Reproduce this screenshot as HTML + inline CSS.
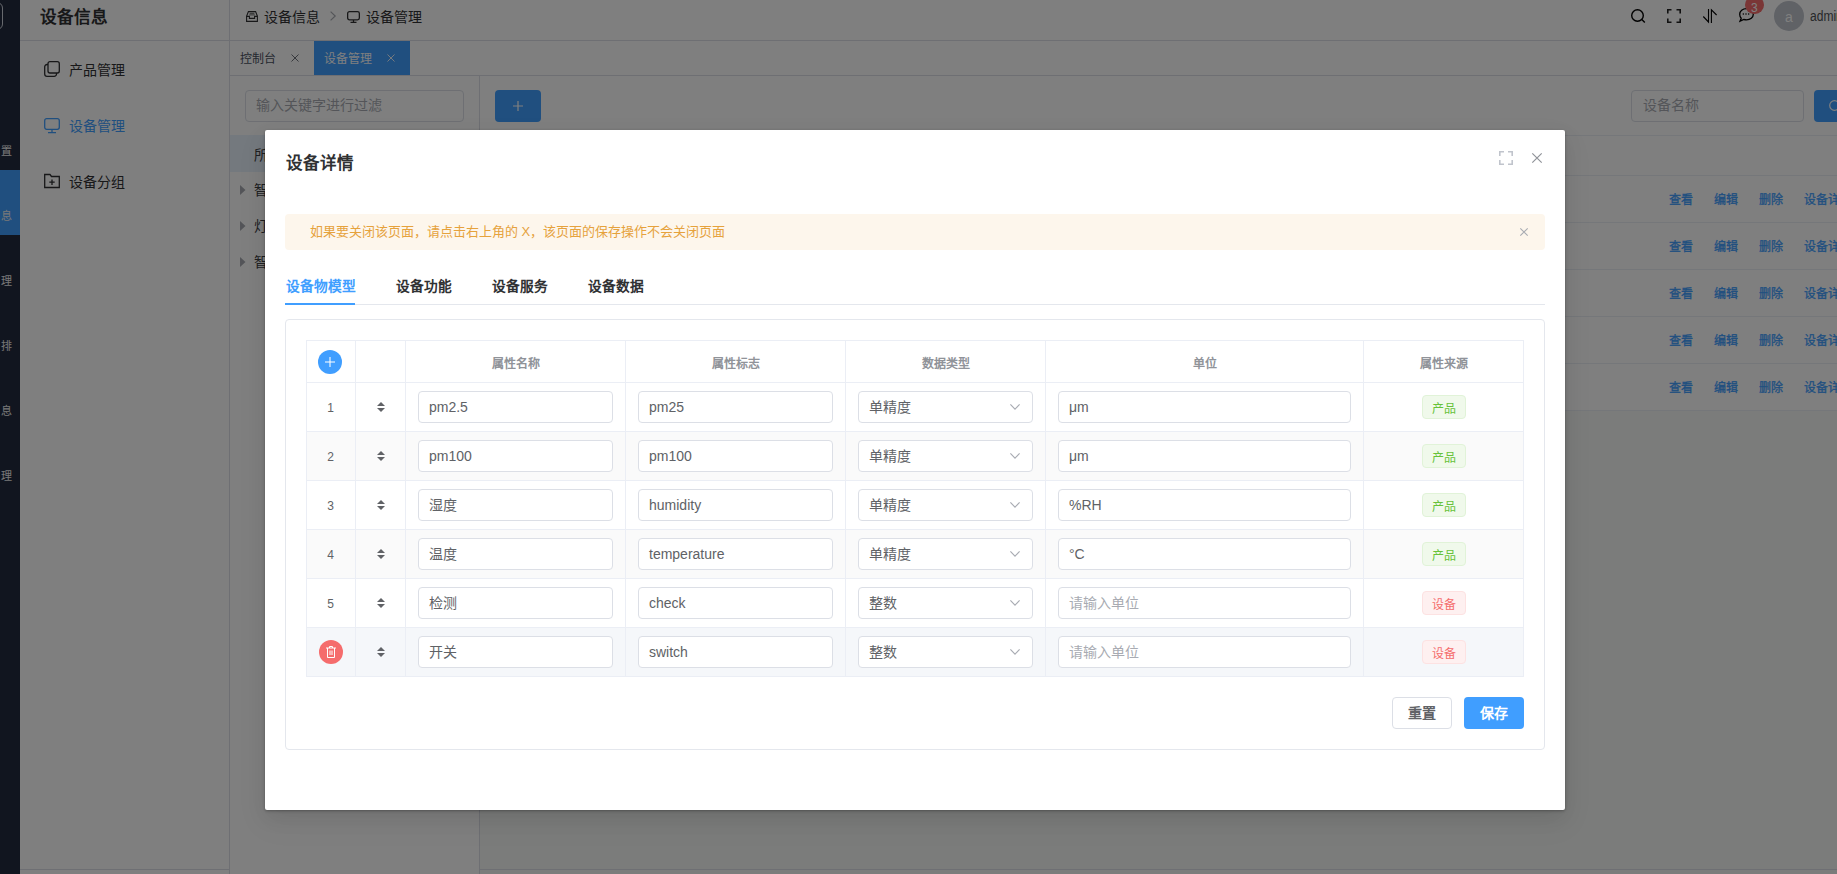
<!DOCTYPE html>
<html lang="zh-CN"><head><meta charset="utf-8"><title>设备详情</title>
<style>
*{box-sizing:border-box;margin:0;padding:0}
html,body{width:1837px;height:874px;overflow:hidden;background:#fff;font-family:"Liberation Sans", sans-serif;}
.abs{position:absolute}
.t{position:absolute;white-space:nowrap;line-height:1}
svg{position:absolute;overflow:visible}
</style></head><body>

<div id="bg" class="abs" style="left:0;top:0;width:1837px;height:874px;background:#fff">
<div class="abs" style="left:0;top:0;width:20px;height:874px;background:#222a3e;overflow:hidden">
<div class="abs" style="left:-26px;top:2px;width:29px;height:28px;border:1px solid #cfd3dc;border-radius:6px"></div>
<div class="abs" style="left:0;top:170px;width:20px;height:65px;background:#409eff"></div>
<div class="t" style="left:0.5px;top:145.5px;font-size:11px;color:#f0f0f0">置</div>
<div class="t" style="left:0.5px;top:210.5px;font-size:11px;color:#f0f0f0">息</div>
<div class="t" style="left:0.5px;top:275.5px;font-size:11px;color:#f0f0f0">理</div>
<div class="t" style="left:0.5px;top:340.5px;font-size:11px;color:#f0f0f0">排</div>
<div class="t" style="left:0.5px;top:405.5px;font-size:11px;color:#f0f0f0">息</div>
<div class="t" style="left:0.5px;top:470.5px;font-size:11px;color:#f0f0f0">理</div>
</div>
<div class="abs" style="left:229px;top:0;width:1px;height:874px;background:#dcdfe6"></div>
<div class="abs" style="left:20px;top:40px;width:1817px;height:1px;background:#dcdfe6"></div>
<div class="t" style="left:40px;top:10px;font-size:16.6px;font-weight:bold;color:#303133">设备信息</div>
<div class="t" style="left:69px;top:63px;font-size:14px;color:#303133">产品管理</div>
<div class="t" style="left:69px;top:119px;font-size:14px;color:#409eff">设备管理</div>
<div class="t" style="left:69px;top:175px;font-size:14px;color:#303133">设备分组</div>
<svg style="left:44px;top:61px" width="16" height="16" viewBox="0 0 16 16" fill="none" stroke="#303133" stroke-width="1.3"><rect x="4" y="0.7" width="11.3" height="11.3" rx="2"/><path d="M4 3.5H3A2.3 2.3 0 0 0 0.7 5.8V13A2.3 2.3 0 0 0 3 15.3H10.2A2.3 2.3 0 0 0 12.5 13V12"/></svg>
<svg style="left:44px;top:118px" width="16" height="16" viewBox="0 0 16 16" fill="none" stroke="#409eff" stroke-width="1.3"><rect x="0.7" y="0.7" width="14.6" height="10.6" rx="2"/><path d="M8 11.3V14.5M4 14.6H12"/></svg>
<svg style="left:44px;top:173px" width="16" height="16" viewBox="0 0 16 16" fill="none" stroke="#303133" stroke-width="1.3"><path d="M0.7 1.5H6L7.5 3.5H15.3V14.5H0.7Z"/><path d="M8 6.5V12M5.3 9.2H10.7"/></svg>
<svg style="left:246px;top:10.5px" width="12" height="11" viewBox="0 0 12 11" fill="none" stroke="#303133" stroke-width="1.1"><path d="M0.6 5.2L2.4 0.6H9.6L11.4 5.2V10.4H0.6Z"/><path d="M0.6 5.4H3.4V7.4H8.6V5.4H11.4"/><path d="M3.6 2.3H8.4M3.2 3.9H8.8" stroke-width="0.8"/></svg>
<div class="t" style="left:264px;top:9.5px;font-size:14px;color:#303133">设备信息</div>
<svg style="left:330px;top:11px" width="6" height="10" viewBox="0 0 6 10" fill="none" stroke="#a8abb2" stroke-width="1.2"><path d="M0.6 0.6L5.2 5L0.6 9.4"/></svg>
<svg style="left:347px;top:10.5px" width="13" height="12" viewBox="0 0 13 12" fill="none" stroke="#303133" stroke-width="1.3"><rect x="0.65" y="0.65" width="11.7" height="8.2" rx="1.8"/><path d="M6.5 8.9V11.2M3.5 11.3H9.5"/></svg>
<div class="t" style="left:366px;top:9.5px;font-size:14px;color:#303133">设备管理</div>
<svg style="left:1631px;top:9px" width="15" height="14" viewBox="0 0 15 14" fill="none" stroke="#000" stroke-width="1.4"><circle cx="6.5" cy="6.5" r="5.8"/><path d="M10.8 10.6L13.8 13.5"/></svg>
<svg style="left:1667px;top:9px" width="14" height="14" viewBox="0 0 14 14" fill="none" stroke="#222" stroke-width="1.6"><path d="M0.8 4.5V0.8H4.5M9.5 0.8H13.2V4.5M13.2 9.5V13.2H9.5M4.5 13.2H0.8V9.5"/></svg>
<svg style="left:1703px;top:9px" width="14" height="14" viewBox="0 0 14 14" fill="none" stroke="#000" stroke-width="1.1"><path d="M0.3 7.5L5.5 13V0M8.4 13.9V0.8L13.6 6"/></svg>
<svg style="left:1739px;top:8px" width="15" height="14" viewBox="0 0 15 14" fill="none" stroke="#000" stroke-width="1.3"><path d="M7.5 0.7C11.3 0.7 14.3 3.2 14.3 6.3C14.3 9.4 11.3 11.9 7.5 11.9C6.5 11.9 5.6 11.7 4.8 11.5L1 13.2L2.2 10.2C1.2 9.2 0.7 7.9 0.7 6.3C0.7 3.2 3.7 0.7 7.5 0.7Z"/><g stroke="none" fill="#000"><circle cx="4.3" cy="6.0" r="0.75"/><circle cx="7" cy="6.0" r="0.75"/><circle cx="9.7" cy="6.0" r="0.75"/></g></svg>
<div class="abs" style="left:1745px;top:-4px;width:19px;height:18px;border-radius:9px;background:#f56c6c"></div>
<div class="t" style="left:1751px;top:2px;font-size:12px;color:#fff">3</div>
<div class="abs" style="left:1774px;top:1px;width:30px;height:30px;border-radius:50%;background:#c0c4cc"></div>
<div class="t" style="left:1785px;top:10px;font-size:14px;color:#fff">a</div>
<div class="t" style="left:1810px;top:9px;font-size:14px;color:#505256;transform:scaleX(0.86);transform-origin:0 0">admin</div>
<div class="abs" style="left:229px;top:75px;width:1608px;height:1px;background:#dcdfe6"></div>
<div class="t" style="left:240px;top:53px;font-size:12px;color:#495060">控制台</div>
<svg style="left:291px;top:54px" width="8" height="8" viewBox="0 0 8 8" stroke="#5f636b" stroke-width="0.9"><path d="M0.5 0.5L7.5 7.5M7.5 0.5L0.5 7.5"/></svg>
<div class="abs" style="left:314px;top:41px;width:96px;height:34px;background:#409eff"></div>
<div class="t" style="left:324px;top:53px;font-size:12px;color:#fff">设备管理</div>
<svg style="left:387px;top:54px" width="8" height="8" viewBox="0 0 8 8" stroke="#fff" stroke-width="0.9"><path d="M0.5 0.5L7.5 7.5M7.5 0.5L0.5 7.5"/></svg>
<div class="abs" style="left:479px;top:76px;width:1px;height:798px;background:#dcdfe6"></div>
<div class="abs" style="left:245px;top:90px;width:219px;height:32px;border:1px solid #dcdfe6;border-radius:4px"></div>
<div class="t" style="left:256px;top:98px;font-size:14px;color:#a8abb2">输入关键字进行过滤</div>
<div class="abs" style="left:230px;top:135px;width:249px;height:37px;background:#e9f2fc"></div>
<div class="t" style="left:254px;top:148px;font-size:14px;color:#404246">所有</div>
<svg style="left:240px;top:185px" width="6" height="10" viewBox="0 0 6 10"><path d="M0 0L5.5 5L0 10Z" fill="#a8abb2"/></svg>
<div class="t" style="left:254px;top:183px;font-size:14px;color:#404246">智能设备</div>
<svg style="left:240px;top:221px" width="6" height="10" viewBox="0 0 6 10"><path d="M0 0L5.5 5L0 10Z" fill="#a8abb2"/></svg>
<div class="t" style="left:254px;top:219px;font-size:14px;color:#404246">灯光设备</div>
<svg style="left:240px;top:257px" width="6" height="10" viewBox="0 0 6 10"><path d="M0 0L5.5 5L0 10Z" fill="#a8abb2"/></svg>
<div class="t" style="left:254px;top:255px;font-size:14px;color:#404246">智能开关</div>
<div class="abs" style="left:20px;top:869px;width:209px;height:1px;background:#dcdfe6"></div>
<div class="abs" style="left:480px;top:410px;width:1357px;height:464px;background:#f6f8f6"></div>
<div class="abs" style="left:480px;top:869px;width:1357px;height:1px;background:#dcdfe6"></div>
<div class="abs" style="left:495px;top:90px;width:46px;height:32px;border-radius:4px;background:#409eff"></div>
<svg style="left:513px;top:101px" width="10" height="10" viewBox="0 0 10 10" stroke="#fff" stroke-width="1.2"><path d="M5 0V10M0 5H10"/></svg>
<div class="abs" style="left:1631px;top:90px;width:173px;height:32px;border:1px solid #dcdfe6;border-radius:4px"></div>
<div class="t" style="left:1643px;top:98px;font-size:14px;color:#a8abb2">设备名称</div>
<div class="abs" style="left:1814px;top:90px;width:60px;height:32px;border-radius:4px;background:#409eff"></div>
<svg style="left:1829px;top:100px" width="12" height="12" viewBox="0 0 12 12" fill="none" stroke="#fff" stroke-width="1.2"><circle cx="5.5" cy="5.5" r="4.8"/></svg>
<div class="abs" style="left:480px;top:135px;width:1357px;height:1px;background:#ebeef5"></div>
<div class="abs" style="left:480px;top:175px;width:1357px;height:1px;background:#ebeef5"></div>
<div class="abs" style="left:480px;top:222px;width:1357px;height:1px;background:#ebeef5"></div>
<div class="abs" style="left:480px;top:269px;width:1357px;height:1px;background:#ebeef5"></div>
<div class="abs" style="left:480px;top:316px;width:1357px;height:1px;background:#ebeef5"></div>
<div class="abs" style="left:480px;top:363px;width:1357px;height:1px;background:#ebeef5"></div>
<div class="abs" style="left:480px;top:410px;width:1357px;height:1px;background:#ebeef5"></div>
<div class="t" style="left:1669px;top:194px;font-size:12px;color:#409eff;-webkit-text-stroke:0.3px #409eff">查看</div>
<div class="t" style="left:1714px;top:194px;font-size:12px;color:#409eff;-webkit-text-stroke:0.3px #409eff">编辑</div>
<div class="t" style="left:1759px;top:194px;font-size:12px;color:#409eff;-webkit-text-stroke:0.3px #409eff">删除</div>
<div class="t" style="left:1804px;top:194px;font-size:12px;color:#409eff;-webkit-text-stroke:0.3px #409eff">设备详情</div>
<div class="t" style="left:1669px;top:241px;font-size:12px;color:#409eff;-webkit-text-stroke:0.3px #409eff">查看</div>
<div class="t" style="left:1714px;top:241px;font-size:12px;color:#409eff;-webkit-text-stroke:0.3px #409eff">编辑</div>
<div class="t" style="left:1759px;top:241px;font-size:12px;color:#409eff;-webkit-text-stroke:0.3px #409eff">删除</div>
<div class="t" style="left:1804px;top:241px;font-size:12px;color:#409eff;-webkit-text-stroke:0.3px #409eff">设备详情</div>
<div class="t" style="left:1669px;top:288px;font-size:12px;color:#409eff;-webkit-text-stroke:0.3px #409eff">查看</div>
<div class="t" style="left:1714px;top:288px;font-size:12px;color:#409eff;-webkit-text-stroke:0.3px #409eff">编辑</div>
<div class="t" style="left:1759px;top:288px;font-size:12px;color:#409eff;-webkit-text-stroke:0.3px #409eff">删除</div>
<div class="t" style="left:1804px;top:288px;font-size:12px;color:#409eff;-webkit-text-stroke:0.3px #409eff">设备详情</div>
<div class="t" style="left:1669px;top:335px;font-size:12px;color:#409eff;-webkit-text-stroke:0.3px #409eff">查看</div>
<div class="t" style="left:1714px;top:335px;font-size:12px;color:#409eff;-webkit-text-stroke:0.3px #409eff">编辑</div>
<div class="t" style="left:1759px;top:335px;font-size:12px;color:#409eff;-webkit-text-stroke:0.3px #409eff">删除</div>
<div class="t" style="left:1804px;top:335px;font-size:12px;color:#409eff;-webkit-text-stroke:0.3px #409eff">设备详情</div>
<div class="t" style="left:1669px;top:382px;font-size:12px;color:#409eff;-webkit-text-stroke:0.3px #409eff">查看</div>
<div class="t" style="left:1714px;top:382px;font-size:12px;color:#409eff;-webkit-text-stroke:0.3px #409eff">编辑</div>
<div class="t" style="left:1759px;top:382px;font-size:12px;color:#409eff;-webkit-text-stroke:0.3px #409eff">删除</div>
<div class="t" style="left:1804px;top:382px;font-size:12px;color:#409eff;-webkit-text-stroke:0.3px #409eff">设备详情</div>
</div>
<div class="abs" style="left:0;top:0;width:1837px;height:874px;background:rgba(0,0,0,.5)"></div>
<div id="dlg" class="abs" style="left:265px;top:130px;width:1300px;height:680px;background:#fff;border-radius:2px;box-shadow:0 1px 3px rgba(0,0,0,.3),0 12px 32px 4px rgba(0,0,0,.04),0 8px 20px rgba(0,0,0,.08)">
</div>
<div class="t" style="left:286px;top:155px;font-size:16.5px;font-weight:bold;color:#303133">设备详情</div>
<svg style="left:1499px;top:151px" width="14" height="14" viewBox="0 0 14 14" fill="none" stroke="#c0c4cc" stroke-width="1.6"><path d="M0.8 5V0.8H5M9 0.8H13.2V5M13.2 9V13.2H9M5 13.2H0.8V9"/></svg>
<svg style="left:1532px;top:153px" width="10" height="10" viewBox="0 0 10 10" stroke="#909399" stroke-width="1.2"><path d="M0.3 0.3L9.7 9.7M9.7 0.3L0.3 9.7"/></svg>
<div class="abs" style="left:285px;top:214px;width:1260px;height:36px;background:#fdf6ec;border-radius:4px"></div>
<div class="t" style="left:310px;top:225px;font-size:13px;color:#e6a23c">如果要关闭该页面，请点击右上角的 X，该页面的保存操作不会关闭页面</div>
<svg style="left:1520px;top:228px" width="8" height="8" viewBox="0 0 8 8" stroke="#a8abb2" stroke-width="1.1"><path d="M0.3 0.3L7.7 7.7M7.7 0.3L0.3 7.7"/></svg>
<div class="t" style="left:285.5px;top:280px;font-size:13.7px;font-weight:bold;color:#409eff">设备物模型</div>
<div class="t" style="left:395.5px;top:280px;font-size:13.7px;font-weight:bold;color:#303133">设备功能</div>
<div class="t" style="left:491.5px;top:280px;font-size:13.7px;font-weight:bold;color:#303133">设备服务</div>
<div class="t" style="left:587.5px;top:280px;font-size:13.7px;font-weight:bold;color:#303133">设备数据</div>
<div class="abs" style="left:285px;top:304px;width:1260px;height:1px;background:#e4e7ed"></div>
<div class="abs" style="left:285px;top:303px;width:70px;height:2px;background:#409eff"></div>
<div class="abs" style="left:285px;top:319px;width:1260px;height:431px;border:1px solid #e4e7ed;border-radius:4px"></div>
<div class="abs" style="left:306px;top:382px;width:1217px;height:49px;background:#fff"></div>
<div class="abs" style="left:306px;top:431px;width:1217px;height:49px;background:#fafafa"></div>
<div class="abs" style="left:306px;top:480px;width:1217px;height:49px;background:#fff"></div>
<div class="abs" style="left:306px;top:529px;width:1217px;height:49px;background:#fafafa"></div>
<div class="abs" style="left:306px;top:578px;width:1217px;height:49px;background:#fff"></div>
<div class="abs" style="left:306px;top:627px;width:1217px;height:49px;background:#f5f7fa"></div>
<div class="abs" style="left:306px;top:340px;width:1218px;height:1px;background:#ebeef5"></div>
<div class="abs" style="left:306px;top:382px;width:1218px;height:1px;background:#ebeef5"></div>
<div class="abs" style="left:306px;top:431px;width:1218px;height:1px;background:#ebeef5"></div>
<div class="abs" style="left:306px;top:480px;width:1218px;height:1px;background:#ebeef5"></div>
<div class="abs" style="left:306px;top:529px;width:1218px;height:1px;background:#ebeef5"></div>
<div class="abs" style="left:306px;top:578px;width:1218px;height:1px;background:#ebeef5"></div>
<div class="abs" style="left:306px;top:627px;width:1218px;height:1px;background:#ebeef5"></div>
<div class="abs" style="left:306px;top:676px;width:1218px;height:1px;background:#ebeef5"></div>
<div class="abs" style="left:306px;top:340px;width:1px;height:337px;background:#ebeef5"></div>
<div class="abs" style="left:355px;top:340px;width:1px;height:337px;background:#ebeef5"></div>
<div class="abs" style="left:405px;top:340px;width:1px;height:337px;background:#ebeef5"></div>
<div class="abs" style="left:625px;top:340px;width:1px;height:337px;background:#ebeef5"></div>
<div class="abs" style="left:845px;top:340px;width:1px;height:337px;background:#ebeef5"></div>
<div class="abs" style="left:1045px;top:340px;width:1px;height:337px;background:#ebeef5"></div>
<div class="abs" style="left:1363px;top:340px;width:1px;height:337px;background:#ebeef5"></div>
<div class="abs" style="left:1523px;top:340px;width:1px;height:337px;background:#ebeef5"></div>
<div class="abs" style="left:318px;top:350px;width:24px;height:24px;border-radius:50%;background:#409eff"></div>
<svg style="left:325px;top:357px" width="10" height="10" viewBox="0 0 10 10" stroke="#fff" stroke-width="1.05"><path d="M5 0V10M0 5H10"/></svg>
<div class="t" style="left:406px;width:220px;text-align:center;top:357.5px;font-size:12px;font-weight:bold;color:#909399">属性名称</div>
<div class="t" style="left:626px;width:220px;text-align:center;top:357.5px;font-size:12px;font-weight:bold;color:#909399">属性标志</div>
<div class="t" style="left:846px;width:200px;text-align:center;top:357.5px;font-size:12px;font-weight:bold;color:#909399">数据类型</div>
<div class="t" style="left:1046px;width:318px;text-align:center;top:357.5px;font-size:12px;font-weight:bold;color:#909399">单位</div>
<div class="t" style="left:1364px;width:160px;text-align:center;top:357.5px;font-size:12px;font-weight:bold;color:#909399">属性来源</div>
<div class="t" style="left:306px;width:49px;text-align:center;top:402px;font-size:12px;color:#606266">1</div>
<svg style="left:376px;top:402px" width="10" height="10" viewBox="0 0 10 10" fill="#606266"><path d="M5 0L9 4H1Z M1 6H9L5 10Z"/></svg>
<div class="abs" style="left:418px;top:391px;width:195px;height:32px;border:1px solid #dcdfe6;border-radius:4px;background:#fff"></div>
<div class="t" style="left:429px;top:400px;font-size:14px;color:#606266">pm2.5</div>
<div class="abs" style="left:638px;top:391px;width:195px;height:32px;border:1px solid #dcdfe6;border-radius:4px;background:#fff"></div>
<div class="t" style="left:649px;top:400px;font-size:14px;color:#606266">pm25</div>
<div class="abs" style="left:858px;top:391px;width:175px;height:32px;border:1px solid #dcdfe6;border-radius:4px;background:#fff"></div>
<div class="t" style="left:869px;top:400px;font-size:14px;color:#606266">单精度</div>
<div class="abs" style="left:1058px;top:391px;width:293px;height:32px;border:1px solid #dcdfe6;border-radius:4px;background:#fff"></div>
<div class="t" style="left:1069px;top:400px;font-size:14px;color:#606266">μm</div>
<svg style="left:1010px;top:404px" width="10" height="6" viewBox="0 0 10 6" fill="none" stroke="#a8abb2" stroke-width="1.1"><path d="M0.4 0.4L5 5.2L9.6 0.4"/></svg>
<div class="abs" style="left:1422px;top:395px;width:44px;height:24px;border:1px solid #e1f3d8;border-radius:4px;background:#f0f9eb"></div>
<div class="t" style="left:1432px;top:402.5px;font-size:12px;color:#67c23a">产品</div>
<div class="t" style="left:306px;width:49px;text-align:center;top:451px;font-size:12px;color:#606266">2</div>
<svg style="left:376px;top:451px" width="10" height="10" viewBox="0 0 10 10" fill="#606266"><path d="M5 0L9 4H1Z M1 6H9L5 10Z"/></svg>
<div class="abs" style="left:418px;top:440px;width:195px;height:32px;border:1px solid #dcdfe6;border-radius:4px;background:#fff"></div>
<div class="t" style="left:429px;top:449px;font-size:14px;color:#606266">pm100</div>
<div class="abs" style="left:638px;top:440px;width:195px;height:32px;border:1px solid #dcdfe6;border-radius:4px;background:#fff"></div>
<div class="t" style="left:649px;top:449px;font-size:14px;color:#606266">pm100</div>
<div class="abs" style="left:858px;top:440px;width:175px;height:32px;border:1px solid #dcdfe6;border-radius:4px;background:#fff"></div>
<div class="t" style="left:869px;top:449px;font-size:14px;color:#606266">单精度</div>
<div class="abs" style="left:1058px;top:440px;width:293px;height:32px;border:1px solid #dcdfe6;border-radius:4px;background:#fff"></div>
<div class="t" style="left:1069px;top:449px;font-size:14px;color:#606266">μm</div>
<svg style="left:1010px;top:453px" width="10" height="6" viewBox="0 0 10 6" fill="none" stroke="#a8abb2" stroke-width="1.1"><path d="M0.4 0.4L5 5.2L9.6 0.4"/></svg>
<div class="abs" style="left:1422px;top:444px;width:44px;height:24px;border:1px solid #e1f3d8;border-radius:4px;background:#f0f9eb"></div>
<div class="t" style="left:1432px;top:451.5px;font-size:12px;color:#67c23a">产品</div>
<div class="t" style="left:306px;width:49px;text-align:center;top:500px;font-size:12px;color:#606266">3</div>
<svg style="left:376px;top:500px" width="10" height="10" viewBox="0 0 10 10" fill="#606266"><path d="M5 0L9 4H1Z M1 6H9L5 10Z"/></svg>
<div class="abs" style="left:418px;top:489px;width:195px;height:32px;border:1px solid #dcdfe6;border-radius:4px;background:#fff"></div>
<div class="t" style="left:429px;top:498px;font-size:14px;color:#606266">湿度</div>
<div class="abs" style="left:638px;top:489px;width:195px;height:32px;border:1px solid #dcdfe6;border-radius:4px;background:#fff"></div>
<div class="t" style="left:649px;top:498px;font-size:14px;color:#606266">humidity</div>
<div class="abs" style="left:858px;top:489px;width:175px;height:32px;border:1px solid #dcdfe6;border-radius:4px;background:#fff"></div>
<div class="t" style="left:869px;top:498px;font-size:14px;color:#606266">单精度</div>
<div class="abs" style="left:1058px;top:489px;width:293px;height:32px;border:1px solid #dcdfe6;border-radius:4px;background:#fff"></div>
<div class="t" style="left:1069px;top:498px;font-size:14px;color:#606266">%RH</div>
<svg style="left:1010px;top:502px" width="10" height="6" viewBox="0 0 10 6" fill="none" stroke="#a8abb2" stroke-width="1.1"><path d="M0.4 0.4L5 5.2L9.6 0.4"/></svg>
<div class="abs" style="left:1422px;top:493px;width:44px;height:24px;border:1px solid #e1f3d8;border-radius:4px;background:#f0f9eb"></div>
<div class="t" style="left:1432px;top:500.5px;font-size:12px;color:#67c23a">产品</div>
<div class="t" style="left:306px;width:49px;text-align:center;top:549px;font-size:12px;color:#606266">4</div>
<svg style="left:376px;top:549px" width="10" height="10" viewBox="0 0 10 10" fill="#606266"><path d="M5 0L9 4H1Z M1 6H9L5 10Z"/></svg>
<div class="abs" style="left:418px;top:538px;width:195px;height:32px;border:1px solid #dcdfe6;border-radius:4px;background:#fff"></div>
<div class="t" style="left:429px;top:547px;font-size:14px;color:#606266">温度</div>
<div class="abs" style="left:638px;top:538px;width:195px;height:32px;border:1px solid #dcdfe6;border-radius:4px;background:#fff"></div>
<div class="t" style="left:649px;top:547px;font-size:14px;color:#606266">temperature</div>
<div class="abs" style="left:858px;top:538px;width:175px;height:32px;border:1px solid #dcdfe6;border-radius:4px;background:#fff"></div>
<div class="t" style="left:869px;top:547px;font-size:14px;color:#606266">单精度</div>
<div class="abs" style="left:1058px;top:538px;width:293px;height:32px;border:1px solid #dcdfe6;border-radius:4px;background:#fff"></div>
<div class="t" style="left:1069px;top:547px;font-size:14px;color:#606266">°C</div>
<svg style="left:1010px;top:551px" width="10" height="6" viewBox="0 0 10 6" fill="none" stroke="#a8abb2" stroke-width="1.1"><path d="M0.4 0.4L5 5.2L9.6 0.4"/></svg>
<div class="abs" style="left:1422px;top:542px;width:44px;height:24px;border:1px solid #e1f3d8;border-radius:4px;background:#f0f9eb"></div>
<div class="t" style="left:1432px;top:549.5px;font-size:12px;color:#67c23a">产品</div>
<div class="t" style="left:306px;width:49px;text-align:center;top:598px;font-size:12px;color:#606266">5</div>
<svg style="left:376px;top:598px" width="10" height="10" viewBox="0 0 10 10" fill="#606266"><path d="M5 0L9 4H1Z M1 6H9L5 10Z"/></svg>
<div class="abs" style="left:418px;top:587px;width:195px;height:32px;border:1px solid #dcdfe6;border-radius:4px;background:#fff"></div>
<div class="t" style="left:429px;top:596px;font-size:14px;color:#606266">检测</div>
<div class="abs" style="left:638px;top:587px;width:195px;height:32px;border:1px solid #dcdfe6;border-radius:4px;background:#fff"></div>
<div class="t" style="left:649px;top:596px;font-size:14px;color:#606266">check</div>
<div class="abs" style="left:858px;top:587px;width:175px;height:32px;border:1px solid #dcdfe6;border-radius:4px;background:#fff"></div>
<div class="t" style="left:869px;top:596px;font-size:14px;color:#606266">整数</div>
<div class="abs" style="left:1058px;top:587px;width:293px;height:32px;border:1px solid #dcdfe6;border-radius:4px;background:#fff"></div>
<div class="t" style="left:1069px;top:596px;font-size:14px;color:#a8abb2">请输入单位</div>
<svg style="left:1010px;top:600px" width="10" height="6" viewBox="0 0 10 6" fill="none" stroke="#a8abb2" stroke-width="1.1"><path d="M0.4 0.4L5 5.2L9.6 0.4"/></svg>
<div class="abs" style="left:1422px;top:591px;width:44px;height:24px;border:1px solid #fde2e2;border-radius:4px;background:#fef0f0"></div>
<div class="t" style="left:1432px;top:598.5px;font-size:12px;color:#f56c6c">设备</div>
<div class="abs" style="left:319px;top:640px;width:24px;height:24px;border-radius:50%;background:#f56c6c"></div>
<svg style="left:326px;top:646px" width="10" height="12" viewBox="0 0 10 12" fill="none" stroke="#fff" stroke-width="1"><path d="M0 2H10M3.5 2V0.5H6.5V2M1.5 2V11.5H8.5V2M4 4.5V9M6 4.5V9"/></svg>
<svg style="left:376px;top:647px" width="10" height="10" viewBox="0 0 10 10" fill="#606266"><path d="M5 0L9 4H1Z M1 6H9L5 10Z"/></svg>
<div class="abs" style="left:418px;top:636px;width:195px;height:32px;border:1px solid #dcdfe6;border-radius:4px;background:#fff"></div>
<div class="t" style="left:429px;top:645px;font-size:14px;color:#606266">开关</div>
<div class="abs" style="left:638px;top:636px;width:195px;height:32px;border:1px solid #dcdfe6;border-radius:4px;background:#fff"></div>
<div class="t" style="left:649px;top:645px;font-size:14px;color:#606266">switch</div>
<div class="abs" style="left:858px;top:636px;width:175px;height:32px;border:1px solid #dcdfe6;border-radius:4px;background:#fff"></div>
<div class="t" style="left:869px;top:645px;font-size:14px;color:#606266">整数</div>
<div class="abs" style="left:1058px;top:636px;width:293px;height:32px;border:1px solid #dcdfe6;border-radius:4px;background:#fff"></div>
<div class="t" style="left:1069px;top:645px;font-size:14px;color:#a8abb2">请输入单位</div>
<svg style="left:1010px;top:649px" width="10" height="6" viewBox="0 0 10 6" fill="none" stroke="#a8abb2" stroke-width="1.1"><path d="M0.4 0.4L5 5.2L9.6 0.4"/></svg>
<div class="abs" style="left:1422px;top:640px;width:44px;height:24px;border:1px solid #fde2e2;border-radius:4px;background:#fef0f0"></div>
<div class="t" style="left:1432px;top:647.5px;font-size:12px;color:#f56c6c">设备</div>
<div class="abs" style="left:1392px;top:697px;width:60px;height:32px;border:1px solid #dcdfe6;border-radius:4px;background:#fff"></div>
<div class="t" style="left:1408px;top:705.5px;font-size:14px;font-weight:bold;color:#606266">重置</div>
<div class="abs" style="left:1464px;top:697px;width:60px;height:32px;border-radius:4px;background:#409eff"></div>
<div class="t" style="left:1480px;top:705.5px;font-size:14px;font-weight:bold;color:#fff">保存</div>
</body></html>
